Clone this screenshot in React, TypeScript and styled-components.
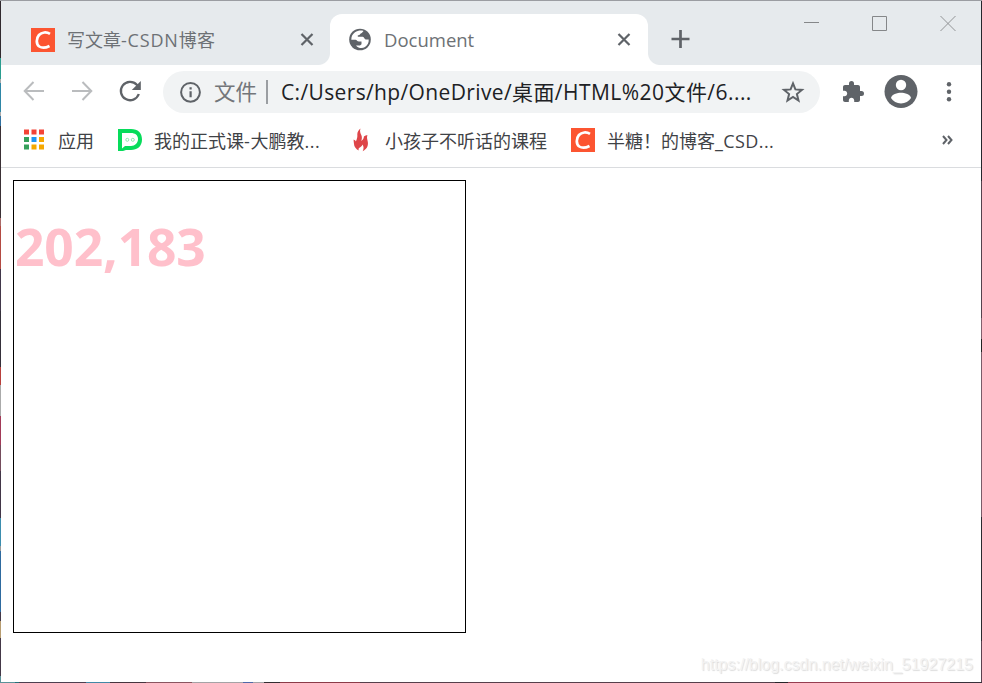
import React from 'react';
import styled, { createGlobalStyle } from 'styled-components';

const Global = createGlobalStyle`
  * { box-sizing: border-box; }
  html, body { margin: 0; padding: 0; overflow: hidden; }
  svg { display: block; flex: none; }
`;

const Desktop = styled.div`
  width: 982px;
  height: 683px;
  display: grid;
  grid-template-columns: 1px 980px 1px;
  grid-template-rows: 1px 681px 1px;
  background: #2b2a30;
  font-family: 'Open Sans', 'Noto Sans CJK SC', sans-serif;
`;

const TopEdge = styled.div`
  grid-column: 1 / 4;
  background: #9b9da2;
`;

const LeftEdge = styled.div`
  background: linear-gradient(
    #30292e 0 57px, #2a9d8f 57px 78px, #a7a9a9 78px 82px, #2e86a6 82px 111px, #aaa 111px 115px,
    #3070a0 115px 125px, #3a3035 125px 217px, #a96a68 217px 225px, #b34a42 225px 268px,
    #41374a 268px 310px, #35303a 310px 366px, #b8403c 366px 384px, #aaa 384px 415px,
    #a23a58 415px 444px, #744c5c 444px 470px, #423648 470px 517px, #3b8dae 517px 545px,
    #999 545px 550px, #2e6a9f 550px 611px, #443848 611px 620px, #b79c70 620px 637px,
    #443848 637px 675px, #5b9299 675px
  );
`;

const RightEdge = styled.div`
  background: linear-gradient(#25272d 0 180px, #54424d 180px 317px, #80606d 317px 338px, #222 338px 351px, #785b68 351px 516px, #2b2a30 516px 640px, #5a4250 640px);
`;

const BottomEdge = styled.div`
  grid-column: 1 / 4;
  background: linear-gradient(
    90deg, #5b9299 0 15px, #247078 15px 19px, #4d3f50 19px 86px, #4288a6 86px 110px,
    #46353f 110px 146px, #8a5560 146px 192px, #a5a3a6 192px 243px, #5068a8 243px 253px,
    #a5a3a6 253px 264px, #332c30 264px 280px, #8b3b48 280px 360px, #563f4b 360px 775px,
    #272529 775px 788px, #963e51 788px 950px, #38303a 950px
  );
`;

const Window = styled.main`
  display: flex;
  flex-direction: column;
  background: #fff;
`;

const TabStrip = styled.header`
  height: 64px;
  display: flex;
  align-items: flex-end;
  background: #e6eaed;
`;

const Tab = styled.div<{ $active?: boolean }>`
  position: relative;
  width: ${p => (p.$active ? 318 : 329)}px;
  height: 51px;
  display: flex;
  align-items: center;
  padding: 0 ${p => (p.$active ? '17px 0 18px' : '16px 0 30px')};
  border-radius: 12px 12px 0 0;
  background: ${p => (p.$active ? '#fff' : 'transparent')};
  &::before, &::after {
    content: '';
    display: ${p => (p.$active ? 'block' : 'none')};
    position: absolute;
    bottom: 0;
    width: 12px;
    height: 12px;
  }
  &::before { left: -12px; background: radial-gradient(circle at 0 0, transparent 11.5px, #fff 12.5px); }
  &::after { right: -12px; background: radial-gradient(circle at 100% 0, transparent 11.5px, #fff 12.5px); }
`;

const Label = styled.span<{ $size: number; $color: string; $left?: number; $spacing?: number; $shift?: number }>`
  font-size: ${p => p.$size}px;
  line-height: 28px;
  font-weight: 400;
  white-space: pre;
  color: ${p => p.$color};
  margin-left: ${p => p.$left ?? 0}px;
  letter-spacing: ${p => p.$spacing ?? 0}px;
  padding-top: ${p => p.$shift ?? 0}px;
`;

const Latin = styled.span<{ $spacing: number }>`
  letter-spacing: ${p => p.$spacing}px;
`;

const Push = styled.div`
  margin-left: auto;
`;

const NewTab = styled.div`
  height: 49px;
  align-self: flex-start;
  margin-top: 13px;
  display: flex;
  align-items: center;
  padding-left: 22px;
`;

const WindowControls = styled.div`
  align-self: flex-start;
  display: flex;
  gap: 53px;
  margin: 14px 25.5px 0 auto;
`;

const Toolbar = styled.div`
  height: 53px;
  display: flex;
  align-items: center;
  padding: 0 21px;
`;

const NavButtons = styled.div`
  display: flex;
  gap: 24px;
  width: 141px;
  padding-bottom: 1px;
`;

const AddressBar = styled.div`
  width: 657px;
  height: 42px;
  display: flex;
  align-items: center;
  padding: 0 15px;
  border-radius: 21px;
  background: #f1f3f4;
`;

const Separator = styled.i`
  width: 2px;
  height: 24px;
  margin-left: 9px;
  background: #9b9ea2;
`;

const Actions = styled.div`
  display: grid;
  grid-template-columns: 43px 62px 6px;
  align-items: center;
  margin-left: 21px;
`;

const Bookmarks = styled.nav`
  height: 50px;
  display: flex;
  align-items: flex-start;
  padding: 9px 28px 0 22px;
  border-bottom: 1px solid #dadcdf;
`;

const Bookmark = styled.div<{ $width: number }>`
  width: ${p => p.$width}px;
  height: 26px;
  display: flex;
  align-items: center;
  flex: none;
`;

const Page = styled.section`
  flex: 1;
  display: flex;
  align-items: flex-start;
  justify-content: space-between;
  padding: 12px 8px 0 12px;
`;

const TrackArea = styled.div`
  width: 453px;
  height: 453px;
  padding: 27px 0 0 1px;
  border: 1px solid #000;
`;

const Coordinates = styled.h1`
  margin: 0;
  color: #ffc0cb;
  font-family: 'Open Sans', sans-serif;
  font-size: 51.5px;
  letter-spacing: -0.1px;
  font-weight: 700;
  line-height: 76px;
`;

const Watermark = styled.span`
  align-self: flex-end;
  font: 16px/20px 'Liberation Sans', Arial, sans-serif;
  color: #f3f3f3;
  text-shadow: 1px 1px 1px #dcdcdc;
  padding-bottom: 7px;
`;

const CsdnIcon = () => (
  <svg width="24" height="24" viewBox="0 0 24 24">
    <path fill="#fc5531" d="M0 0h24v24H0z" />
    <path fill="none" stroke="#fff" strokeWidth="2.7" d="M19 5.8C15.500 3.700 10.700 4 8 7C5 10.500 5 16 8.300 18.500C11 20.300 15 19.800 18.500 18" />
  </svg>
);

const CloseIcon = () => (
  <svg width="14" height="16" viewBox="0 0 14 16">
    <path d="M1.5 2l11 11m0-11l-11 11" stroke="#5f6368" strokeWidth="2.2" />
  </svg>
);

const GlobeIcon = () => (
  <svg width="24" height="26" viewBox="0 0 24 26">
    <circle cx="12" cy="12.5" r="10.8" fill="#5f6368" />
    <path fill="#fff" d="M15.500 3.900C12.500 3.200 9.500 3.700 7 5.300C4.700 6.900 3.300 9.500 3.300 12.700H7.500C9 12.900 9 14.500 11 14.500h2.500v2.800l-1.500 1.200H8c2.500 3 6.500 3.200 9 1.500c2.600-1.800 4-4.500 3.700-7.500h-3c-1.300 0-1.300-2.500-3-2.700H9.800V8.200c2.500 0 2.300-2 4-2.300z" />
  </svg>
);

const ArrowIcon = ({ forward = false }: { forward?: boolean }) => (
  <svg width="24" height="24" viewBox="0 0 24 24">
    <path d={forward ? 'M2 12h19M12.5 3l8.800 9-8.800 9' : 'M22 12H3M11.5 3l-8.800 9 8.800 9'} fill="none" stroke="#babcbe" strokeWidth="2" />
  </svg>
);

const ReloadIcon = () => (
  <svg width="24" height="24" viewBox="0 0 24 24">
    <path d="M20.8 15A9.2 9.2 0 1 1 18.8 5.700L20.500 7.500" fill="none" stroke="#5f6368" strokeWidth="2.300" />
    <path d="M22.8 2v9h-9z" fill="#5f6368" />
  </svg>
);

const InfoIcon = () => (
  <svg width="24" height="24" viewBox="0 0 24 24">
    <circle cx="12.500" cy="12.300" r="9.400" fill="none" stroke="#5f6368" strokeWidth="2" />
    <path d="M11.500 11.300h2.200v6h-2.200zM11.500 7.300h2.200v2.200h-2.200z" fill="#5f6368" />
  </svg>
);

const StarIcon = () => (
  <svg width="24" height="24" viewBox="0 0 24 24">
    <path d="M12 3.400l2.400 6 6.600.5-5.100 4.200 1.600 6.400-5.500-3.500-5.500 3.500 1.600-6.400L3 9.900l6.600-.5z" fill="none" stroke="#5f6368" strokeWidth="2" />
  </svg>
);

const PuzzleIcon = () => (
  <svg width="24" height="24" viewBox="0 0 24 24">
    <path fill="#5f6368" d="M20.5 11H19V7c0-1.1-.9-2-2-2h-4V3.5a2.5 2.5 0 0 0-5 0V5H4c-1.1 0-1.99.9-1.99 2v3.8H3.5c1.49 0 2.7 1.21 2.7 2.7s-1.21 2.7-2.7 2.7H2V20c0 1.1.9 2 2 2h3.8v-1.5c0-1.49 1.21-2.7 2.7-2.7s2.7 1.21 2.7 2.7V22H17c1.1 0 2-.9 2-2v-4h1.5a2.5 2.5 0 0 0 0-5z" />
  </svg>
);

const ProfileIcon = () => (
  <svg width="34" height="34" viewBox="0 0 34 34">
    <circle cx="17" cy="16.500" r="16.500" fill="#5f6368" />
    <circle cx="17" cy="10" r="5.200" fill="#fff" />
    <path d="M7 23.100c0-3.600 6.700-5.400 10-5.400s10 1.800 10 5.400c-2.100 3.500-5.800 5.300-10 5.300s-7.900-1.800-10-5.300z" fill="#fff" />
  </svg>
);

const MenuIcon = () => (
  <svg width="6" height="20" viewBox="0 0 6 20" fill="#5f6368">
    <circle cx="3" cy="2.300" r="2.200" /><circle cx="3" cy="9.800" r="2.200" /><circle cx="3" cy="17.300" r="2.200" />
  </svg>
);

const appColors = ['#f44336', '#f44336', '#f44336', '#34a05a', '#2196f3', '#f5a800', '#34a05a', '#f5a800', '#f5a800'];

const AppsIcon = () => (
  <svg width="22" height="22" viewBox="0 0 22 22">
    {appColors.map((c, i) => <rect key={i} x={1 + (i % 3) * 7.5} y={0.5 + Math.floor(i / 3) * 7.5} width="5" height="5" fill={c} />)}
  </svg>
);

const DapengIcon = () => (
  <svg width="24" height="24" viewBox="0 0 24 24">
    <path d="M0 1h13c7 0 11 4 11 10.500 0 7-5 10.500-11 10.500H8l-3 1H0z" fill="#07dc5b" />
    <path d="M4 5h9c4 0 7 2 7 6s-3 7-7 7H7L4 20.500z" fill="#fff" />
    <circle cx="9.300" cy="11.800" r="1.500" fill="none" stroke="#8ee9b0" /><circle cx="14.800" cy="11.800" r="1.500" fill="none" stroke="#8ee9b0" />
  </svg>
);

const FlameIcon = () => (
  <svg width="16" height="24" viewBox="0 0 16 24">
    <path d="M7.500 0.500c-1.200 3 .2 5 .9 6.800 .8 2.200 .5 4-.1 5.600 1.700-.8 2.600-3 2.600-4.400 1.200-.9 2.200-1.200 3.600-1.200-.8 1.600-.4 3.200-.1 4.800 .5 2.200.9 3.800.2 5.800-.8 2.300-2.700 4.100-4.900 5.300 1.300-2.700 1-4.900-.2-6.700-.6 2-1.800 2.500-3.400 3.400-.8.800-.6 1.700-.2 2.700C3.200 21.200 1 18.900 1 16c0-1.500-.6-2.800-.3-4.500 1 .5 1.800 1 2.200 1.900C4.300 10 4.500 8.800 4.300 6.500 4.200 4 5.500 2 7.500.5z" fill="#de4549" />
  </svg>
);

const ink = '#5f6368';
const bookmarkInk = '#3f4246';

export default function App() {
  return (
    <Desktop>
      <Global />
      <TopEdge />
      <LeftEdge />
      <Window>
        <TabStrip>
          <Tab>
            <CsdnIcon />
            <Label $size={18} $color="#6d7175" $left={12} $shift={1}>写文章<Latin $spacing={0.8}>-CSDN</Latin><Latin $spacing={0.3}>博客</Latin></Label>
            <Push><CloseIcon /></Push>
          </Tab>
          <Tab $active>
            <GlobeIcon />
            <Label $size={18.5} $color="#6d7175" $left={12} $shift={1}>Document</Label>
            <Push><CloseIcon /></Push>
          </Tab>
          <NewTab>
            <svg width="20" height="20" viewBox="0 0 20 20">
              <path d="M10.500 1v18M1.500 10h18" stroke={ink} strokeWidth="2.700" />
            </svg>
          </NewTab>
          <WindowControls>
            <svg width="15" height="16" viewBox="0 0 15 16"><path d="M0 7.500h15" stroke="#858789" /></svg>
            <svg width="15" height="16" viewBox="0 0 15 16"><path d="M.5 1.500h14v14H.5z" fill="none" stroke="#858789" /></svg>
            <svg width="16" height="17" viewBox="0 0 16 17"><path d="M.5 1l15 15m0-15l-15 15" stroke="#919395" /></svg>
          </WindowControls>
        </TabStrip>
        <Toolbar>
          <NavButtons><ArrowIcon /><ArrowIcon forward /><ReloadIcon /></NavButtons>
          <AddressBar>
            <InfoIcon />
            <Label $size={21.5} $color="#73767a" $left={12}>文件</Label>
            <Separator />
            <Label $size={21} $color="#202124" $left={13}><Latin $spacing={0.36}>C:/Users/hp/OneDrive/</Latin><Latin $spacing={0.45}>桌面/HTML%20文件/6....</Latin></Label>
            <Push><StarIcon /></Push>
          </AddressBar>
          <Actions>
            <PuzzleIcon />
            <ProfileIcon />
            <MenuIcon />
          </Actions>
        </Toolbar>
        <Bookmarks>
          <Bookmark $width={95}><AppsIcon /><Label $size={18} $color={bookmarkInk} $left={13} $shift={2}>应用</Label></Bookmark>
          <Bookmark $width={235}><DapengIcon /><Label $size={18} $color={bookmarkInk} $left={12} $shift={2}>我的正式课<Latin $spacing={0.7}>-</Latin>大鹏教<Latin $spacing={0.5}>...</Latin></Label></Bookmark>
          <Bookmark $width={218}><FlameIcon /><Label $size={18} $color={bookmarkInk} $left={16} $shift={2}>小孩子不听话的课程</Label></Bookmark>
          <Bookmark $width={230}><CsdnIcon /><Label $size={18} $color={bookmarkInk} $left={12} $shift={2}>半糖！的博客<Latin $spacing={0.4}>_CSD...</Latin></Label></Bookmark>
          <Push>
            <svg width="11" height="26" viewBox="0 0 11 26"><path d="M1 9l3.500 4L1 17M6 9l3.500 4L6 17" fill="none" stroke={ink} strokeWidth="2" /></svg>
          </Push>
        </Bookmarks>
        <Page>
          <TrackArea><Coordinates>202,183</Coordinates></TrackArea>
          <Watermark>https://blog.csdn.net/weixin_51927215</Watermark>
        </Page>
      </Window>
      <RightEdge />
      <BottomEdge />
    </Desktop>
  );
}
